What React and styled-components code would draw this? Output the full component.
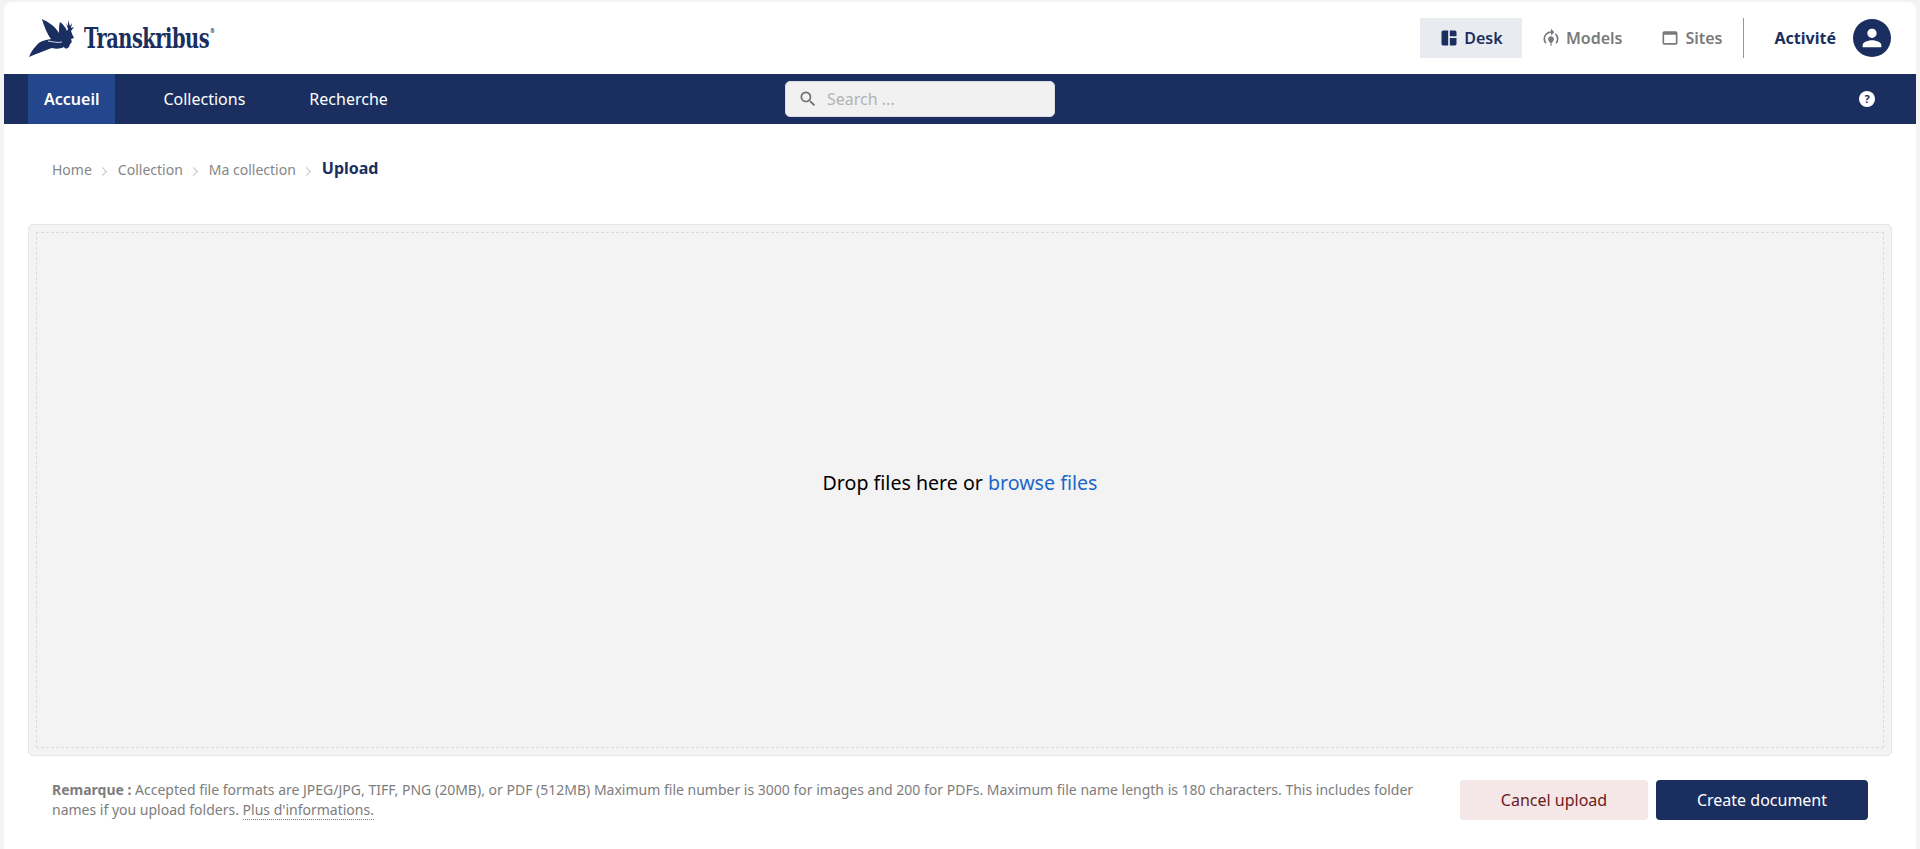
import React from 'react';
import styled, { createGlobalStyle } from 'styled-components';
import { MdSpaceDashboard, MdModelTraining, MdOutlineWebAsset, MdPerson, MdSearch } from 'react-icons/md';

const NAVY = '#1a2f5f';

const GlobalStyle = createGlobalStyle`
  html, body {
    margin: 0;
    height: 100%;
    background: #f3f3f3;
    font-family: "Noto Sans", "Open Sans", sans-serif;
    overflow: hidden;
  }
  #root { height: 100%; }
`;

function Logo() {
  return (
    <LogoLink>
      <svg width="48" height="40" viewBox="4 4 48 40">
        <path
          fill={NAVY}
          d="M5 43C7 38 9 35 12 32C14 29 17 27 22 26L27 25C23 20 20 12 18 5C24 8 30 11 35 19C35 14 35 11 36 8C39 10 42 14 43 17L44 15L42 9L44 12L44 6L46 12L48 9L47 14L50 13L47 17C48 20 49 22 50 24L47 25C48 27 48 29 46 30L45 33C43 35 41 35 40 33C36 35 32 35 28 34C24 35 20 37 15 39C11 40 8 42 5 43Z"
        />
        <path fill="none" stroke="#fff" strokeWidth="0.8" d="M24 27C30 28 34 29 38 28" />
      </svg>
      <LogoWord>
        Transkribus<LogoMark>®</LogoMark>
      </LogoWord>
    </LogoLink>
  );
}

export default function App() {
  return (
    <>
      <GlobalStyle />
      <Shell>
        <TopBar>
          <Logo />
          <TopRight>
            <AppTab $active $gap="19px">
              <MdSpaceDashboard size={20} />
              Desk
            </AppTab>
            <AppTab $gap="38px">
              <MdModelTraining size={20} />
              Models
            </AppTab>
            <AppTab $gap="41px">
              <MdOutlineWebAsset size={20} />
              Sites
            </AppTab>
            <Divider />
            <Activity>Activité</Activity>
            <Avatar>
              <MdPerson size={28} />
            </Avatar>
          </TopRight>
        </TopBar>

        <NavBar>
          <NavItems>
            <NavItem $active>Accueil</NavItem>
            <NavItem>Collections</NavItem>
            <NavItem>Recherche</NavItem>
          </NavItems>
          <SearchBox>
            <MdSearch size={20} />
            <SearchInput placeholder="Search ..." />
          </SearchBox>
          <HelpButton>?</HelpButton>
        </NavBar>

        <Breadcrumb>
          <Crumb>Home</Crumb>
          <Sep />
          <Crumb>Collection</Crumb>
          <Sep />
          <Crumb>Ma collection</Crumb>
          <Sep />
          <CurrentCrumb>Upload</CurrentCrumb>
        </Breadcrumb>

        <DropPanel>
          <DropInner>
            <DropText>
              Drop files here or <BrowseLink>browse files</BrowseLink>
            </DropText>
          </DropInner>
        </DropPanel>

        <Footer>
          <Note>
            <strong>Remarque :</strong> Accepted file formats are JPEG/JPG, TIFF, PNG (20MB), or PDF (512MB) Maximum file
            number is 3000 for images and 200 for PDFs. Maximum file name length is 180 characters. This includes folder
            names if you upload folders. <MoreInfo>Plus d'informations.</MoreInfo>
          </Note>
          <Buttons>
            <CancelButton>Cancel upload</CancelButton>
            <CreateButton>Create document</CreateButton>
          </Buttons>
        </Footer>
      </Shell>
    </>
  );
}

const Shell = styled.div`
  height: calc(100% - 2px);
  margin: 2px 4px 0;
  background: #fff;
  border-radius: 8px 8px 0 0;
  display: flex;
  flex-direction: column;
`;

const TopBar = styled.header`
  height: 72px;
  flex: none;
  display: flex;
  align-items: center;
  justify-content: space-between;
  padding: 0 25px 0 24px;
`;

const LogoLink = styled.div`
  display: flex;
  align-items: center;
  color: ${NAVY};
`;

const LogoWord = styled.span`
  margin-left: 8px;
  font-family: "DejaVu Serif", serif;
  font-stretch: condensed;
  font-weight: 700;
  font-size: 28px;
  letter-spacing: -0.6px;
  white-space: nowrap;
  transform: scaleX(0.77);
  transform-origin: left center;
`;

const LogoMark = styled.span`
  font-size: 7px;
  vertical-align: 15px;
  margin-left: 1px;
`;

const TopRight = styled.div`
  display: flex;
  align-items: center;
`;

const AppTab = styled.div`
  height: 40px;
  width: ${(p) => (p.$active ? '102px' : 'auto')};
  margin-right: ${(p) => p.$gap};
  display: flex;
  align-items: center;
  justify-content: center;
  gap: 5px;
  background: ${(p) => (p.$active ? '#e8ebf0' : 'transparent')};
  color: ${(p) => (p.$active ? NAVY : '#7a7a7a')};
  font-size: 16px;
  font-weight: 600;
`;

const Divider = styled.div`
  width: 1px;
  height: 40px;
  margin-left: -21px;
  background: #8f98ab;
`;

const Activity = styled.div`
  margin-left: 31px;
  color: ${NAVY};
  font-size: 16px;
  font-weight: 700;
`;

const Avatar = styled.div`
  width: 38px;
  height: 38px;
  margin-left: 17px;
  border-radius: 50%;
  background: ${NAVY};
  color: #fff;
  display: flex;
  align-items: center;
  justify-content: center;
`;

const NavBar = styled.nav`
  height: 50px;
  flex: none;
  background: ${NAVY};
  display: flex;
  align-items: stretch;
  padding-left: 24px;
`;

const NavItems = styled.div`
  display: flex;
  width: 757px;
`;

const NavItem = styled.div`
  display: flex;
  align-items: center;
  padding: 0 16px;
  margin-right: 32px;
  background: ${(p) => (p.$active ? '#24468c' : 'transparent')};
  color: #fff;
  font-size: 16px;
  font-weight: ${(p) => (p.$active ? 600 : 400)};
`;

const SearchBox = styled.label`
  width: 270px;
  height: 36px;
  align-self: center;
  box-sizing: border-box;
  padding-left: 12px;
  display: flex;
  align-items: center;
  gap: 8px;
  background: #f1f1f1;
  border: 1px solid #d9dce3;
  border-radius: 5px;
  color: #6f6f6f;
`;

const SearchInput = styled.input`
  flex: 1;
  min-width: 0;
  border: 0;
  outline: 0;
  padding: 0;
  margin-left: 1px;
  background: transparent;
  font-family: inherit;
  font-size: 16px;
  &::placeholder { color: #b3b3b3; opacity: 1; }
`;

const HelpButton = styled.div`
  width: 16px;
  height: 16px;
  align-self: center;
  margin-left: auto;
  margin-right: 41px;
  border-radius: 50%;
  background: #fff;
  color: ${NAVY};
  font-size: 11px;
  font-weight: 700;
  line-height: 16px;
  text-align: center;
`;

const Breadcrumb = styled.div`
  height: 100px;
  flex: none;
  box-sizing: border-box;
  padding: 34px 0 0 48px;
  display: flex;
  align-items: flex-start;
`;

const Crumb = styled.span`
  font-size: 14px;
  line-height: 24px;
  color: #868686;
`;

const Sep = styled.span`
  width: 6px;
  height: 6px;
  margin: 10px 12px 0 7px;
  border-top: 1px solid #c4c4c4;
  border-right: 1px solid #c4c4c4;
  transform: rotate(45deg) scale(0.9);
`;

const CurrentCrumb = styled.span`
  font-size: 16px;
  line-height: 20px;
  font-weight: 700;
  color: ${NAVY};
`;

const DropPanel = styled.section`
  height: 532px;
  flex: none;
  box-sizing: border-box;
  margin: 0 24px;
  padding: 7px;
  background: #f3f3f3;
  border: 1px solid #e6e6e6;
  border-radius: 5px;
`;

const DropInner = styled.div`
  height: 100%;
  box-sizing: border-box;
  border: 1px dashed #dcdcdc;
  display: flex;
  align-items: center;
  justify-content: center;
`;

const DropText = styled.div`
  font-size: 19.6px;
  color: #000;
  margin-bottom: 16px;
`;

const BrowseLink = styled.span`
  color: #1a66c9;
`;

const Footer = styled.footer`
  display: flex;
  align-items: flex-start;
  padding: 24px 48px 0 48px;
  justify-content: space-between;
`;

const Note = styled.p`
  width: 1370px;
  margin: 0;
  font-size: 14px;
  line-height: 20px;
  color: #7d7d7d;
  strong { font-weight: 700; }
`;

const MoreInfo = styled.span`
  border-bottom: 1px dotted #7d7d7d;
`;

const Buttons = styled.div`
  display: flex;
  gap: 8px;
`;

const CancelButton = styled.button`
  width: 188px;
  height: 40px;
  border: 0;
  border-radius: 4px;
  background: #f5e6e8;
  color: #6b1a1a;
  font-family: inherit;
  font-size: 16px;
`;

const CreateButton = styled.button`
  width: 212px;
  height: 40px;
  border: 0;
  border-radius: 4px;
  background: ${NAVY};
  color: #fff;
  font-family: inherit;
  font-size: 16px;
`;
